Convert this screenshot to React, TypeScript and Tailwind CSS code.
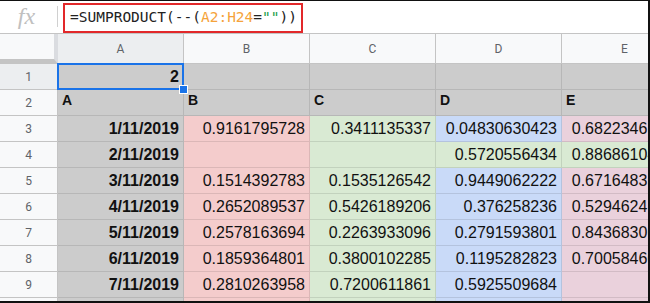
import React from "react";

type Cell = { v: string; bg: string; bold?: boolean; align?: "left" | "right" };

const GRAY = "bg-[#cccccc]";
const PINK = "bg-[#f4cccc]";
const GREEN = "bg-[#d9ead3]";
const BLUE = "bg-[#c9daf8]";
const ROSE = "bg-[#ead1dc]";

const rows: Cell[][] = [
  [
    { v: "2", bg: GRAY, bold: true },
    { v: "", bg: GRAY },
    { v: "", bg: GRAY },
    { v: "", bg: GRAY },
    { v: "", bg: GRAY },
  ],
  [
    { v: "A", bg: GRAY, bold: true, align: "left" },
    { v: "B", bg: GRAY, bold: true, align: "left" },
    { v: "C", bg: GRAY, bold: true, align: "left" },
    { v: "D", bg: GRAY, bold: true, align: "left" },
    { v: "E", bg: GRAY, bold: true, align: "left" },
  ],
  [
    { v: "1/11/2019", bg: GRAY, bold: true },
    { v: "0.9161795728", bg: PINK },
    { v: "0.3411135337", bg: GREEN },
    { v: "0.04830630423", bg: BLUE },
    { v: "0.68223461572", bg: ROSE },
  ],
  [
    { v: "2/11/2019", bg: GRAY, bold: true },
    { v: "", bg: PINK },
    { v: "", bg: GREEN },
    { v: "0.5720556434", bg: GREEN },
    { v: "0.88686104927", bg: GREEN },
  ],
  [
    { v: "3/11/2019", bg: GRAY, bold: true },
    { v: "0.1514392783", bg: PINK },
    { v: "0.1535126542", bg: GREEN },
    { v: "0.9449062222", bg: BLUE },
    { v: "0.67164835519", bg: ROSE },
  ],
  [
    { v: "4/11/2019", bg: GRAY, bold: true },
    { v: "0.2652089537", bg: PINK },
    { v: "0.5426189206", bg: GREEN },
    { v: "0.376258236", bg: BLUE },
    { v: "0.52946241783", bg: ROSE },
  ],
  [
    { v: "5/11/2019", bg: GRAY, bold: true },
    { v: "0.2578163694", bg: PINK },
    { v: "0.2263933096", bg: GREEN },
    { v: "0.2791593801", bg: BLUE },
    { v: "0.84368306215", bg: ROSE },
  ],
  [
    { v: "6/11/2019", bg: GRAY, bold: true },
    { v: "0.1859364801", bg: PINK },
    { v: "0.3800102285", bg: GREEN },
    { v: "0.1195282823", bg: BLUE },
    { v: "0.70058460391", bg: ROSE },
  ],
  [
    { v: "7/11/2019", bg: GRAY, bold: true },
    { v: "0.2810263958", bg: PINK },
    { v: "0.7200611861", bg: GREEN },
    { v: "0.5925509684", bg: BLUE },
    { v: "", bg: ROSE },
  ],
  [
    { v: "", bg: GRAY },
    { v: "", bg: PINK },
    { v: "", bg: GREEN },
    { v: "", bg: BLUE },
    { v: "", bg: ROSE },
  ],
];

const cols = ["A", "B", "C", "D", "E"];

export default function App() {
  return (
    <div className="w-[650px] h-[303px] overflow-hidden bg-white border-t border-r-2 border-b-2 border-[#111] font-['Liberation_Sans',Arial,sans-serif]">
      {/* Formula bar */}
      <div className="flex h-[33px] border-b border-[#c4c4c4] bg-white">
        <div className="w-[57px] flex items-center justify-center pb-[2px]">
          <span className="font-['Liberation_Serif',serif] italic text-[24px] leading-none text-[#c0c0c0] pr-[4px]">
            fx
          </span>
        </div>
        <div className="w-px h-[21px] mt-[5px] bg-[#d0d0d0]" />
        <div className="ml-[5px] mt-[2px] w-[240px] h-[30px] border-2 border-[#e2282a] flex items-center pl-[5px] font-['DejaVu_Sans_Mono',monospace] text-[14.5px] text-[#222] whitespace-nowrap">
          <span>=SUMPRODUCT(--(</span>
          <span className="text-[#f5a33b]">A2:H24</span>
          <span>=</span>
          <span className="text-[#1a9c4a]">""</span>
          <span>))</span>
        </div>
      </div>

      {/* Grid */}
      <div className="grid grid-cols-[58px_126px_126px_126px_126px_126px] grid-rows-[30px_26px_26px_26px_26px_26px_26px_26px_26px_26px_26px] w-[688px]">
        {/* corner */}
        <div className="bg-[#f8f9fa] border-r-4 border-r-[#dadce0] border-b-[5px] border-b-[#c4c4c4]" />
        {cols.map((c, i) => (
          <div
            key={c}
            className={`${i === 0 ? "bg-[#eceef0]" : "bg-[#f8f9fa]"} border-r border-b border-[#c4c4c4] flex items-center justify-center font-['Roboto',sans-serif] text-[12px] text-[#5f6368]`}
          >
            {c}
          </div>
        ))}
        {rows.map((r, ri) => (
          <React.Fragment key={ri}>
            <div
              className={`${ri === 0 ? "bg-[#eceef0]" : "bg-[#f8f9fa]"} border-r border-b border-[#c4c4c4] flex items-center justify-center font-['Roboto',sans-serif] text-[12px] text-[#5f6368]`}
            >
              {ri + 1}
            </div>
            {r.map((cell, ci) => {
              const selected = ri === 0 && ci === 0;
              return (
                <div
                  key={ci}
                  className={`${cell.bg} relative border-r border-b border-black/10 flex items-center whitespace-nowrap ${
                    selected ? "z-10" : "overflow-hidden"
                  } ${
                    cell.align === "left"
                      ? "justify-start pl-[4px] pb-[4px] text-[14px]"
                      : "justify-end pr-[4px] text-[16px]"
                  } ${cell.bold ? "font-bold" : ""} text-[#111]`}
                >
                  {cell.v}
                  {selected && (
                    <>
                      <div className="absolute left-[-1px] top-[-1px] right-[-1px] bottom-[-1px] border-2 border-[#1a73e8] pointer-events-none" />
                      <div className="absolute right-[-5px] bottom-[-5px] w-[9px] h-[9px] bg-[#1a73e8] border border-white" />
                    </>
                  )}
                </div>
              );
            })}
          </React.Fragment>
        ))}
      </div>
    </div>
  );
}
